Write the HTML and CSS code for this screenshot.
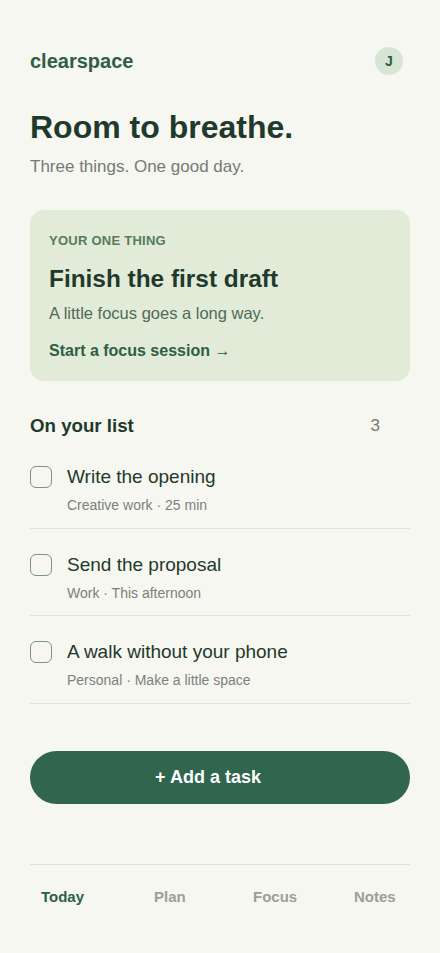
FILE: index.html
```html
<!DOCTYPE html>
<html lang="en">
<head>
<meta charset="utf-8">
<title>clearspace</title>
<link rel="stylesheet" href="styles.css">
</head>
<body>
<div class="app">
  <header class="top">
    <div class="brand">clearspace</div>
    <div class="avatar">J</div>
  </header>

  <h1 class="title">Room to breathe.</h1>
  <p class="subtitle">Three things. One good day.</p>

  <section class="card">
    <div class="eyebrow">YOUR ONE THING</div>
    <h2 class="card-title">Finish the first draft</h2>
    <p class="card-text">A little focus goes a long way.</p>
    <a class="card-link" href="#">Start a focus session →</a>
  </section>

  <div class="list-head">
    <h3 class="list-title">On your list</h3>
    <span class="count">3</span>
  </div>

  <ul class="tasks">
    <li class="task">
      <span class="check"></span>
      <div class="task-body">
        <div class="task-name">Write the opening</div>
        <div class="task-meta">Creative work · 25 min</div>
      </div>
    </li>
    <li class="task">
      <span class="check"></span>
      <div class="task-body">
        <div class="task-name">Send the proposal</div>
        <div class="task-meta">Work · This afternoon</div>
      </div>
    </li>
    <li class="task">
      <span class="check"></span>
      <div class="task-body">
        <div class="task-name">A walk without your phone</div>
        <div class="task-meta">Personal · Make a little space</div>
      </div>
    </li>
  </ul>

  <button class="add">+ Add a task</button>

  <nav class="nav">
    <a class="nav-item active" href="#">Today</a>
    <a class="nav-item" href="#">Plan</a>
    <a class="nav-item" href="#">Focus</a>
    <a class="nav-item" href="#">Notes</a>
  </nav>
</div>
</body>
</html>
```

FILE: styles.css
```css
* { box-sizing: border-box; }
html, body { margin: 0; padding: 0; }
body {
  background: #f6f7f1;
  font-family: "Liberation Sans", Arial, sans-serif;
  color: #1f3a2c;
}
.app {
  padding: 47px 30px 0;
}
.top {
  display: flex;
  justify-content: space-between;
  align-items: center;
  height: 28px;
}
.brand {
  font-size: 20px;
  font-weight: 700;
  color: #2e5e45;
}
.avatar {
  width: 28px;
  height: 28px;
  border-radius: 50%;
  background: #d6e5d4;
  color: #2e5e45;
  font-size: 14px;
  font-weight: 700;
  display: flex;
  align-items: center;
  justify-content: center;
  margin-right: 7px;
}
.title {
  margin: 33px 0 0;
  font-size: 32px;
  line-height: 38px;
  font-weight: 700;
  color: #1f3a2c;
}
.subtitle {
  margin: 10px 0 0;
  font-size: 17px;
  line-height: 21px;
  color: #737b74;
}
.card {
  margin-top: 33px;
  background: #e2ead8;
  border-radius: 14px;
  padding: 23px 19px 20px;
}
.eyebrow {
  font-size: 13px;
  line-height: 16px;
  font-weight: 700;
  color: #577a60;
  letter-spacing: 0.25px;
}
.card-title {
  margin: 15px 0 0;
  font-size: 24.4px;
  line-height: 30px;
  font-weight: 700;
  color: #1f3a2c;
}
.card-text {
  margin: 9px 0 0;
  font-size: 16.5px;
  line-height: 20px;
  color: #4f6b57;
}
.card-link {
  display: block;
  margin-top: 18px;
  font-size: 16px;
  line-height: 20px;
  font-weight: 700;
  color: #2e5e45;
  text-decoration: none;
}
.list-head {
  margin-top: 34px;
  display: flex;
  justify-content: space-between;
  align-items: center;
}
.list-title {
  margin: 0;
  font-size: 18.7px;
  line-height: 22px;
  font-weight: 700;
  color: #1f3a2c;
}
.count {
  font-size: 17px;
  color: #727a74;
  margin-right: 30px;
}
.tasks {
  list-style: none;
  margin: 4px 0 0;
  padding: 0;
}
.task {
  display: flex;
  gap: 15px;
  align-items: flex-start;
  padding: 25px 0 13.5px;
  border-bottom: 1.5px solid #e0e2dc;
}
.check {
  flex: none;
  width: 22px;
  height: 22px;
  border: 1.5px solid #7c9483;
  border-radius: 6px;
}
.task-name {
  font-size: 19px;
  line-height: 22px;
  color: #1f3a2c;
}
.task-meta {
  margin-top: 8px;
  font-size: 14px;
  line-height: 18px;
  color: #7a827c;
}
.add {
  display: block;
  width: 100%;
  height: 53px;
  margin-top: 47px;
  padding: 0 24px 0 0;
  border: none;
  border-radius: 27px;
  background: #2f664d;
  color: #ffffff;
  font-family: "Liberation Sans", Arial, sans-serif;
  font-size: 18px;
  font-weight: 700;
}
.nav {
  margin-top: 60px;
  border-top: 1px solid #dfe1db;
  display: grid;
  grid-template-columns: 113px 99px 101px 1fr;
  padding: 23px 0 0 11px;
}
.nav-item {
  font-size: 15px;
  line-height: 18px;
  font-weight: 700;
  color: #9a9f99;
  text-decoration: none;
}
.nav-item.active {
  color: #2e5e45;
}
```
